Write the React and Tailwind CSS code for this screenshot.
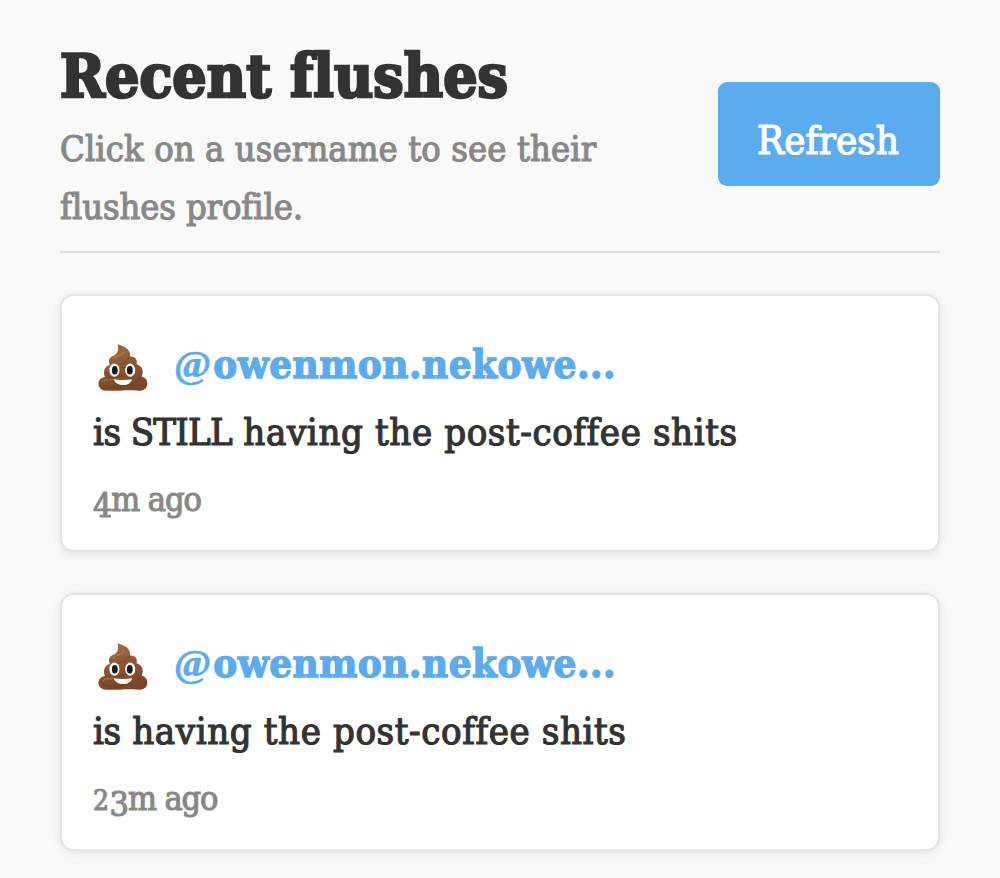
import React from 'react';

const flushes = [
  { id: 1, handle: 'owenmon.nekowe...', verb: 'is', shout: ' STILL', text: ' having the post-coffee shits', low: '4', ago: 'm ago' },
  { id: 2, handle: 'owenmon.nekowe...', verb: 'is', text: ' having the post-coffee shits', small: '2', low: '3', ago: 'm ago' },
];

const PoopIcon = () => (
  <svg width="50" height="48" viewBox="0 0 50 48" className="shrink-0">
    <defs>
      <linearGradient id="poop" x1="0" y1="0" x2="0.2" y2="1">
        <stop offset="0" stopColor="#a36d45" />
        <stop offset="0.5" stopColor="#8f5833" />
        <stop offset="1" stopColor="#7c4624" />
      </linearGradient>
    </defs>
    <path
      d="M19.500 0.300C26 2 33 5.500 32 12.500C37.500 12.500 40 16 38.500 20.500C44 21.500 46.500 27 43.500 32.500C47.500 33.500 49.500 36.500 49.300 40C49 44.500 46 46.800 41 46.800C36 46.600 32 46.200 25 46.400C18 46.600 14 47 8.500 46.800C3.500 46.500 0.700 44 0.500 40C0.400 36 3 33.500 7 33C4.500 27.500 7 21.800 12 21C9.500 16 12 12.500 17 11C20 9 21 5 19.500 0.300Z"
      fill="url(#poop)"
    />
    <path d="M13 20.500C20 22 28 19 32 12.500M8 33C18 35.500 35 31 39 20.500M6 42C18 45.500 38 41 43.500 32.500" fill="none" stroke="#653617" strokeWidth="1.200" opacity="0.350" strokeLinecap="round" />
    <path d="M15 15C18 11.500 23 12.500 26 8M11 25C14 21.500 17 23 22 21.800M5 37.500C8 34.500 11 36 15 35.500" fill="none" stroke="#bd8a60" strokeWidth="1.600" opacity="0.450" strokeLinecap="round" />
    <ellipse cx="16.400" cy="26.200" rx="5" ry="6.600" fill="#fff" />
    <ellipse cx="32.200" cy="26.200" rx="5" ry="6.600" fill="#fff" />
    <ellipse cx="16.800" cy="26.200" rx="2.900" ry="4.300" fill="#17191c" />
    <ellipse cx="31.800" cy="26.200" rx="2.900" ry="4.300" fill="#17191c" />
    <path d="M15.800 35.300C21 36.300 28 36.300 34 35.300C33 43 17.500 43 15.800 35.300Z" fill="#fff" />
  </svg>
);

const FlushCard = ({ flush }) => (
  <div className="h-[258px] rounded-[14px] border-2 border-[#e5e5e5] bg-white pl-[31px] pt-[36px] shadow-[0_2px_8px_rgba(0,0,0,0.1)]">
    <div className="flex h-[66px] items-center">
      <div className="ml-[5px] mt-[5px]">
        <PoopIcon />
      </div>
      <a href="#" className="-mt-[2px] ml-[26px] text-[40px] font-bold leading-[64px] tracking-[0.5px] text-[#5babef] [-webkit-text-stroke:1.3px]">
        <span className="font-['Liberation_Serif'] tracking-[2px] [-webkit-text-stroke:0.6px]">@</span>{flush.handle}
      </a>
    </div>
    <p className="text-[38px] leading-[68px] tracking-[0.6px] text-[#333] [-webkit-text-stroke:1.2px]">
      <span className="tracking-[-0.4px]">{flush.verb}</span>
      {flush.shout && <span className="tracking-[-0.8px]">{flush.shout}</span>}
      {flush.text}
    </p>
    <p className="text-[34px] leading-[66px] tracking-[-1.1px] text-[#888] [-webkit-text-stroke:1.1px]">
      {flush.small && <span className="text-[28px] tracking-[0.5px]">{flush.small}</span>}
      <span className="inline-block translate-y-[6px]">{flush.low}</span>{flush.ago}
    </p>
  </div>
);

export default function App() {
  return (
    <div className="h-[878px] overflow-hidden whitespace-nowrap bg-[#f9f9f9] px-[60px] pt-[40px] font-['DejaVu_Serif_Condensed','DejaVu_Serif',serif] [font-stretch:condensed]">
      <header className="flex h-[213px] justify-between border-b-2 border-[#dcdcdc]">
        <div>
          <h1 className="text-[60px] font-bold leading-[72px] tracking-[0.1px] text-[#333] [-webkit-text-stroke:2.6px]">Recent flushes</h1>
          <p className="mt-[8px] text-[36px] leading-[58px] tracking-[0.1px] text-[#888] [-webkit-text-stroke:1.1px]">
            Click on a username to see their
            <br />
            <span className="tracking-[-0.1px]">flushes profile.</span>
          </p>
        </div>
        <button className="mt-[42px] h-[104px] w-[222px] rounded-[9px] bg-[#5babef] pt-[12px] pr-[2px] text-[40px] text-white [-webkit-text-stroke:1.2px]">Refresh</button>
      </header>
      <main className="mt-[41px] flex flex-col gap-[41px]">
        {flushes.map(f => (
          <FlushCard key={f.id} flush={f} />
        ))}
      </main>
    </div>
  );
}
